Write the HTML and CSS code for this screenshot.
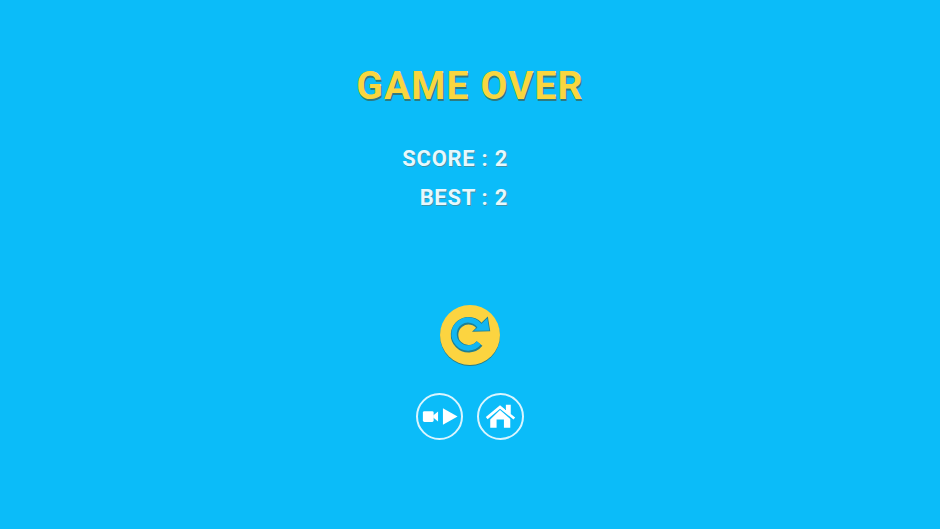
FILE: index.html
```html
<!DOCTYPE html>
<html lang="en">
<head>
    <meta charset="UTF-8">
    <title>Game Over</title>
    <link rel="stylesheet" href="styles.css">
</head>
<body>
    <div class="screen">
        <h1 class="title">GAME OVER</h1>

        <div class="scores">
            <div class="score-row">SCORE : 2</div>
            <div class="score-row">BEST : 2</div>
        </div>

        <button class="btn-replay">
            <svg viewBox="0 0 60 62" width="60" height="62">
                <circle cx="30" cy="31" r="30" fill="#2a7d86"/>
                <circle cx="30" cy="30" r="30" fill="#fcd440"/>
                <path d="M39.500 38.500A14 14 0 1 1 40.500 22.500" fill="none" stroke="#1f7f93" stroke-width="7.500"/>
                <path d="M47.300 13.200L49.300 25.500L34 25.800Z" fill="#1f7f93" stroke="#1f7f93" stroke-width="1.600"/>
                <path d="M38.900 37.900A14 14 0 1 1 40.500 22.500" fill="none" stroke="#12b6f2" stroke-width="5.300"/>
                <path d="M47.300 13.200L49.300 25.500L34 25.800Z" fill="#12b6f2"/>
            </svg>
        </button>

        <div class="small-btns">
            <button class="btn-small">
                <svg viewBox="0 0 44 44" width="43" height="43">
                    <rect x="5" y="16.500" width="11" height="11" rx="1.500" fill="#fff"/>
                    <path d="M15.500 21L20.500 17V27L15.500 23Z" fill="#fff"/>
                    <path d="M25.500 13.500L40.500 22L25.500 30.500Z" fill="#fff"/>
                </svg>
            </button>
            <button class="btn-small">
                <svg viewBox="0 0 44 44" width="43" height="43">
                    <path d="M7 22.500L21.500 10.500L27.500 15.300V10H32.500V19.400L37 23L35.300 25L21.500 14L8.800 24.700Z" fill="#fff"/>
                    <path d="M11.500 25L21.500 15.400L32 24.500V33.500H25.500V25H18V33.500H11.500Z" fill="#fff"/>
                </svg>
            </button>
        </div>
    </div>
</body>
</html>
```

FILE: styles.css
```css
html, body {
    margin: 0;
    height: 100%;
}
body {
    background-color: #0bbcf9;
    font-family: "Roboto", "Liberation Sans", sans-serif;
}
.screen {
    display: flex;
    flex-direction: column;
    align-items: center;
    height: 529px;
    overflow: hidden;
}
.title {
    margin: 63px 0 0 0;
    font-size: 39px;
    line-height: 46px;
    font-weight: 700;
    letter-spacing: 1.1px;
    color: #f9d63f;
    text-shadow: 1px 2px 0 #2f7a80;
}
.scores {
    width: 940px;
    margin-top: 37px;
    display: flex;
    flex-direction: column;
    gap: 13px;
}
.score-row {
    width: 508px;
    text-align: right;
    font-size: 22px;
    line-height: 26px;
    font-weight: 700;
    letter-spacing: 0.7px;
    color: #e6f8fd;
    text-shadow: 1px 1px 0 #3c94ab;
}
.btn-replay {
    margin-top: 94px;
    padding: 0;
    border: none;
    background: none;
    height: 62px;
}
.small-btns {
    margin-top: 26px;
    display: flex;
    gap: 14px;
}
.btn-small {
    width: 47px;
    height: 47px;
    padding: 0;
    border: 2px solid rgba(255, 255, 255, 0.85);
    border-radius: 50%;
    background: none;
    display: flex;
    align-items: center;
    justify-content: center;
}
```
